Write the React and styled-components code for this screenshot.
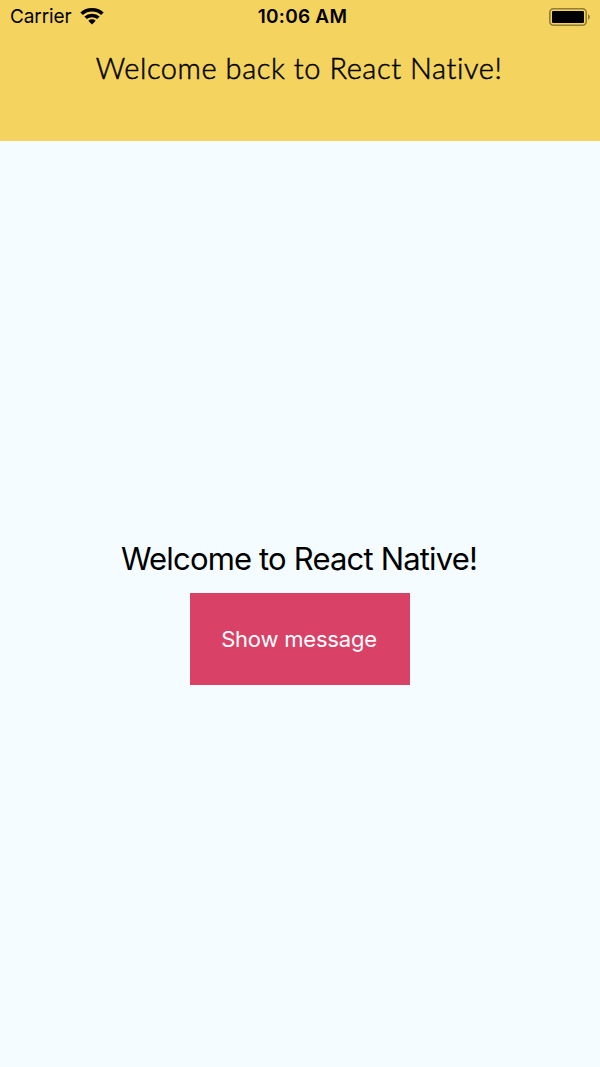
import React from 'react';
import styled, { createGlobalStyle } from 'styled-components';

const GlobalStyle = createGlobalStyle`
  * { box-sizing: border-box; }
  html, body { margin: 0; padding: 0; }
`;
const Screen = styled.div`
  width: 600px;
  height: 1067px;
  display: flex;
  flex-direction: column;
  overflow: hidden;
  background: #f5fcff;
  color: #000;
  font-family: Inter, "Liberation Sans", sans-serif;
`;
const Banner = styled.header`
  height: 141px;
  flex: none;
  background: #f4d35e;
`;
const StatusBar = styled.div`
  height: 33px;
  display: grid;
  grid-template-columns: 1fr auto 1fr;
  align-items: center;
  padding: 0 9px 0 10px;
  font-size: 19px;
  line-height: 32px;
`;
const Carrier = styled.div`
  display: flex;
  align-items: center;
  gap: 8px;
`;
const Label = styled.span`
  white-space: nowrap;
  letter-spacing: ${(p) => p.$spacing || '0'};
`;
const Time = styled.time`
  padding-left: 4px;
  font-weight: 600;
  letter-spacing: 0.25px;
  white-space: nowrap;
`;
const Battery = styled.svg`
  justify-self: end;
`;
const Notice = styled.p`
  margin: 14px 0 0;
  padding-right: 2px;
  text-align: center;
  font: 300 29px/42px Lato, sans-serif;
  font-variant-ligatures: none;
  -webkit-text-stroke: 0.5px #000;
`;
const Main = styled.main`
  flex: 1;
  display: flex;
  flex-direction: column;
  align-items: center;
  padding-top: 398px;
`;
const Title = styled.h1`
  margin: 0 0 14px;
  padding-right: 2px;
  font-size: 31px;
  font-weight: 400;
  line-height: 40px;
`;
const Button = styled.button`
  width: 220px;
  height: 92px;
  border: 0;
  padding: 0 2px 0 0;
  background: #da4167;
  color: #fff;
  font: 400 22px/30px Inter, sans-serif;
`;

export default function App() {
  return (
    <Screen>
      <GlobalStyle />
      <Banner>
        <StatusBar>
          <Carrier>
            <Label $spacing="-0.1px">Carrier</Label>
            <svg width="24" height="17" viewBox="0 0 24 18" preserveAspectRatio="none">
              <g fill="none" stroke="#000" strokeWidth="3.7">
                <path d="M1.6 6.1a15 15 0 0 1 20.8 0" />
                <path d="M5.6 10.4a9.3 9.3 0 0 1 12.8 0" />
              </g>
              <path d="M12 17.4l-3.7-3.9a5.4 5.4 0 0 1 7.4 0z" />
            </svg>
          </Carrier>
          <Time>10:06 AM</Time>
          <Battery width="42" height="18" viewBox="0 0 42 18">
            <rect x=".8" y=".8" width="36.4" height="16.4" rx="3.6" fill="none" stroke="#927e38" strokeWidth="1.6" />
            <rect x="3" y="3" width="32" height="12" rx="1.2" />
            <path d="M39 6q4 3 0 6z" fill="#927e38" />
          </Battery>
        </StatusBar>
        <Notice><Label $spacing="0.56px">Welcome back to React Native!</Label></Notice>
      </Banner>
      <Main>
        <Title><Label $spacing="-0.83px">Welcome to React Native!</Label></Title>
        <Button type="button"><Label $spacing="-0.2px">Show message</Label></Button>
      </Main>
    </Screen>
  );
}
